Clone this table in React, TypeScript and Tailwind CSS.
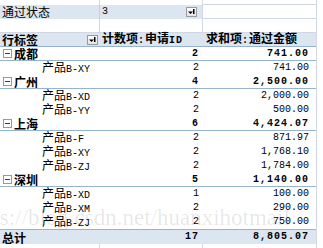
import React from "react";

interface Item {
  label: string;
  count: number;
  amount: string;
}

interface Group {
  city: string;
  count: number;
  amount: string;
  items: Item[];
}

const groups: Group[] = [
  { city: "成都", count: 2, amount: "741.00", items: [{ label: "产品B-XY", count: 2, amount: "741.00" }] },
  {
    city: "广州",
    count: 4,
    amount: "2,500.00",
    items: [
      { label: "产品B-XD", count: 2, amount: "2,000.00" },
      { label: "产品B-YY", count: 2, amount: "500.00" },
    ],
  },
  {
    city: "上海",
    count: 6,
    amount: "4,424.07",
    items: [
      { label: "产品B-F", count: 2, amount: "871.97" },
      { label: "产品B-XY", count: 2, amount: "1,768.10" },
      { label: "产品B-ZJ", count: 2, amount: "1,784.00" },
    ],
  },
  {
    city: "深圳",
    count: 5,
    amount: "1,140.00",
    items: [
      { label: "产品B-XD", count: 1, amount: "100.00" },
      { label: "产品B-XM", count: 2, amount: "290.00" },
      { label: "产品B-ZJ", count: 2, amount: "750.00" },
    ],
  },
];

// split text into latin / CJK runs so each gets its own font size
const Txt = ({ s, bold }: { s: string; bold?: boolean }) => (
  <span className="inline-flex items-baseline leading-[14px] whitespace-nowrap">
    {(s.match(/[\x00-\xff]+|[^\x00-\xff]+/g) || []).map((p, i) =>
      /^[\x00-\xff]/.test(p) ? (
        <span
          key={i}
          className={`font-['Liberation_Mono',monospace] text-[10px] leading-[14px] ${bold ? "font-bold tracking-[1px]" : ""}`}
        >
          {p}
        </span>
      ) : (
        <span
          key={i}
          className={`font-['Noto_Sans_CJK_SC',sans-serif] text-[12px] leading-[14px] ${bold ? "font-bold" : ""}`}
        >
          {p}
        </span>
      )
    )}
  </span>
);

const FilterBtn = () => (
  <span className="w-[11px] h-[10px] border border-[#9a9a9a] bg-gradient-to-b from-white to-[#e4e4e4] flex items-center justify-center">
    <svg width="9" height="8" viewBox="0 0 9 8">
      <path d="M1 3.5 H6 L3.5 6 Z" fill="#000" />
      <rect x="6" y="1" width="1.5" height="5" fill="#000" />
    </svg>
  </span>
);

const Minus = () => (
  <svg width="9" height="9" viewBox="0 0 9 9" className="ml-[3px] mr-[2px] shrink-0">
    <rect x="0.5" y="0.5" width="8" height="8" fill="#fff" stroke="#8c9bb0" />
    <rect x="2" y="4" width="5" height="1" fill="#3a3a3a" />
  </svg>
);

const Row = ({
  a,
  b,
  c,
  className,
}: {
  a: React.ReactNode;
  b: React.ReactNode;
  c: React.ReactNode;
  className?: string;
}) => (
  <div className={`flex h-[14px] leading-[14px] text-black ${className || ""}`}>
    <div className="w-[100px] flex items-center whitespace-nowrap">{a}</div>
    <div className="w-[103px] flex items-center justify-end pr-[4px] whitespace-nowrap">{b}</div>
    <div className="w-[113px] flex items-center justify-end pr-[7px] whitespace-nowrap">{c}</div>
  </div>
);

const App = () => {
  return (
    <div className="relative w-[323px] h-[248px] overflow-hidden bg-white flex">
      <div className="w-[316px] flex flex-col">
        {/* report filter area */}
        <div className="flex h-[5px]">
          <div className="w-[100px] border-r border-[#d0d7e5]" />
          <div className="w-[103px] border-r border-[#d0d7e5]" />
          <div className="w-[113px] border-b border-[#d0d7e5]" />
        </div>
        <div className="flex h-[14px] leading-[14px]">
          <div className="w-[100px] bg-[#dce6f1] border-r border-[#c5d1e3] pl-[2px] flex items-center">
            <Txt s="通过状态" />
          </div>
          <div className="w-[103px] bg-[#dce6f1] border-r border-[#d0d7e5] pl-[2px] pr-[5px] flex items-center justify-between">
            <Txt s="3" />
            <FilterBtn />
          </div>
          <div className="w-[113px] border-b border-[#d0d7e5]" />
        </div>
        <div className="flex h-[14px] border-b border-[#d0d7e5]">
          <div className="w-[100px] border-r border-[#d0d7e5]" />
          <div className="w-[103px] border-r border-[#d0d7e5]" />
          <div className="w-[113px]" />
        </div>

        {/* header */}
        <div className="flex h-[14px] leading-[14px] bg-[#dce6f1] border-b border-[#95b3d7]">
          <div className="w-[100px] pl-[2px] pr-[2px] flex items-center justify-between">
            <Txt s="行标签" bold />
            <FilterBtn />
          </div>
          <div className="w-[103px] pl-[2px] flex items-center">
            <Txt s="计数项:申请ID" bold />
          </div>
          <div className="w-[113px] pl-[3px] flex items-center">
            <Txt s="求和项:通过金额" bold />
          </div>
        </div>

        {groups.map((g) => (
          <React.Fragment key={g.city}>
            <Row
              className="border-b border-[#95b3d7]"
              a={
                <>
                  <Minus />
                  <Txt s={g.city} bold />
                </>
              }
              b={<Txt s={String(g.count)} bold />}
              c={<Txt s={g.amount} bold />}
            />
            {g.items.map((it, i) => (
              <Row
                key={i}
                a={
                  <span className="pl-[42px]">
                    <Txt s={it.label} />
                  </span>
                }
                b={<Txt s={String(it.count)} />}
                c={<Txt s={it.amount} />}
              />
            ))}
          </React.Fragment>
        ))}

        <Row
          className="bg-[#dce6f1] border-t border-[#95b3d7] h-[15px]"
          a={
            <span className="pl-[2px]">
              <Txt s="总计" bold />
            </span>
          }
          b={<Txt s="17" bold />}
          c={<Txt s="8,805.07" bold />}
        />
        <div className="flex flex-1">
          <div className="w-[100px] border-r border-[#d0d7e5]" />
          <div className="w-[103px] border-r border-[#d0d7e5]" />
        </div>
      </div>
      <div className="flex-1 border-l border-[#d0d7e5]" />

      {/* watermark */}
      <div className="absolute left-[-36px] top-[206px] font-['Liberation_Serif',serif] text-[23px] leading-[24px] text-[rgba(0,0,0,0.1)] whitespace-nowrap pointer-events-none">
        https://blog.csdn.net/huanxihotmail
      </div>
    </div>
  );
};

export default App;
